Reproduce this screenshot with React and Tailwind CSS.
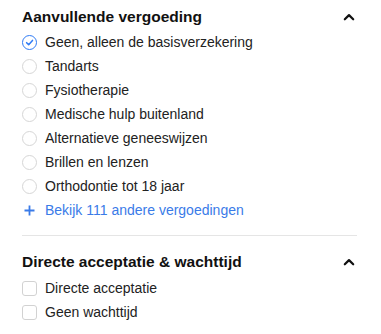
import React from 'react';

const font = { fontFamily: '"Liberation Sans", Arial, sans-serif' };

const Chevron = () => (
  <svg width="12" height="8" viewBox="0 0 12 8" fill="none">
    <path d="M1.8 6.3 L6 2.1 L10.2 6.3" stroke="#111" strokeWidth="2.2" strokeLinecap="round" strokeLinejoin="round" />
  </svg>
);

const Radio = ({ checked }) =>
  checked ? (
    <span className="w-[15px] h-[15px] rounded-full border-[1.5px] border-[#2f7bf5] flex items-center justify-center">
      <svg width="9" height="9" viewBox="0 0 10 10" fill="none">
        <path d="M1.8 5.2 L4.1 7.4 L8.3 2.7" stroke="#2f7bf5" strokeWidth="1.7" strokeLinecap="round" strokeLinejoin="round" />
      </svg>
    </span>
  ) : (
    <span className="w-[15px] h-[15px] rounded-full border border-[#d6d6d6] bg-white" />
  );

const Check = () => <span className="w-[15px] h-[15px] rounded-[3px] border border-[#d2d2d2] bg-white" />;

const options = [
  'Geen, alleen de basisverzekering',
  'Tandarts',
  'Fysiotherapie',
  'Medische hulp buitenland',
  'Alternatieve geneeswijzen',
  'Brillen en lenzen',
  'Orthodontie tot 18 jaar',
];

export default function App() {
  return (
    <div className="bg-white w-[381px] h-[334px] overflow-hidden pl-[22px] pr-[24px]" style={font}>
      <div className="flex items-center justify-between h-[20px] mt-[7px]">
        <h2 className="text-[15.5px] font-bold text-[#111]">Aanvullende vergoeding</h2>
        <span className="mr-[2px]"><Chevron /></span>
      </div>
      <ul className="mt-[3px]">
        {options.map((o, i) => (
          <li key={o} className="flex items-center h-[24px] gap-[8px]">
            <Radio checked={i === 0} />
            <span className="text-[14px] text-[#222]">{o}</span>
          </li>
        ))}
        <li className="flex items-center h-[24px] gap-[8px] text-[#3a7be8]">
          <span className="w-[15px] flex justify-center">
            <svg width="11" height="11" viewBox="0 0 11 11"><path d="M5.5 0.5v10M0.5 5.5h10" stroke="#3a7be8" strokeWidth="1.8" /></svg>
          </span>
          <span className="text-[14px]">Bekijk 111 andere vergoedingen</span>
        </li>
      </ul>
      <div className="border-t border-[#e5e5e5] mt-[13px]" />
      <div className="flex items-center justify-between h-[20px] mt-[16px]">
        <h2 className="text-[15.5px] font-bold text-[#111]">Directe acceptatie &amp; wachttijd</h2>
        <span className="mr-[2px]"><Chevron /></span>
      </div>
      <ul className="mt-[4px]">
        {['Directe acceptatie', 'Geen wachttijd'].map(o => (
          <li key={o} className="flex items-center h-[24px] gap-[8px]">
            <Check />
            <span className="text-[14px] text-[#222]">{o}</span>
          </li>
        ))}
      </ul>
    </div>
  );
}
